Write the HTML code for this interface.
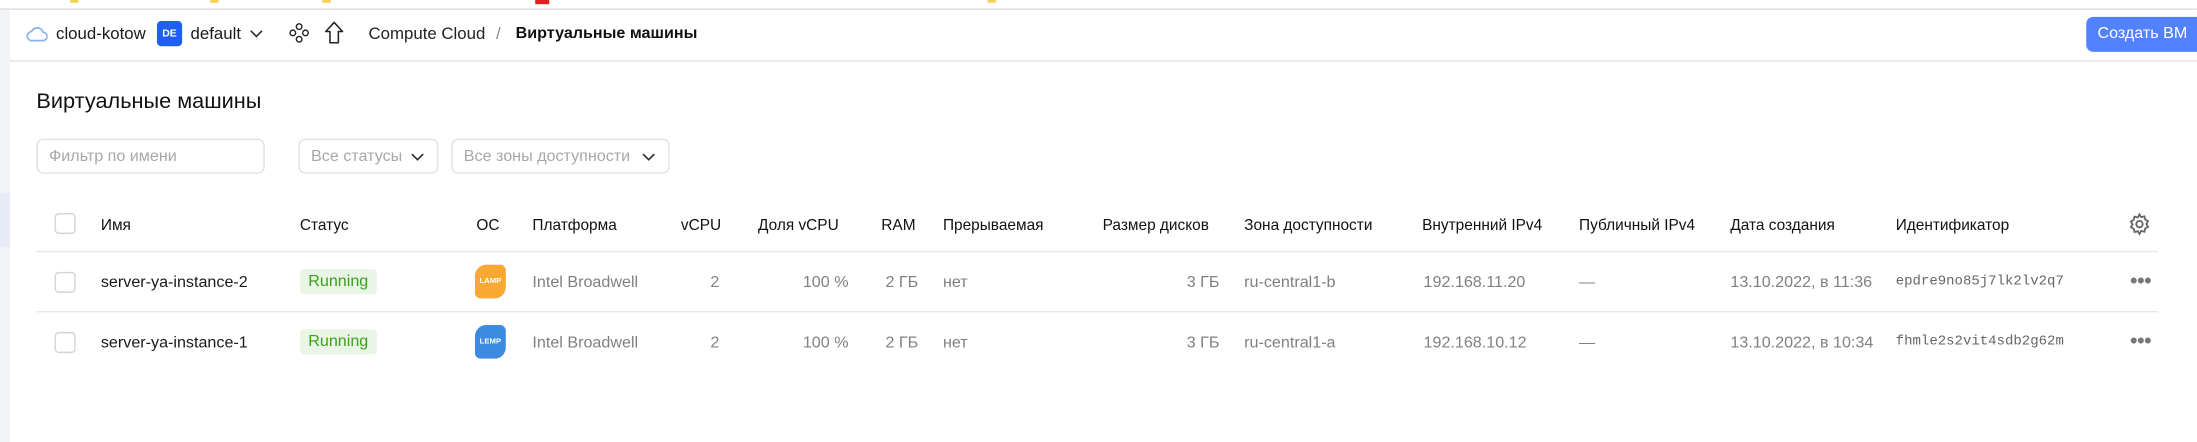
<!DOCTYPE html>
<html><head><meta charset="utf-8"><style>
html,body{margin:0;padding:0;background:#fff;overflow:hidden}
body{width:2197px;height:442px;position:relative}
#w{position:absolute;left:0;top:0;width:1568px;height:316px;transform:scale(1.4011);transform-origin:0 0;font-family:"Liberation Sans","Noto Sans CJK SC",sans-serif;color:#1a1a1a;font-size:11.5px}
.a{position:absolute;white-space:nowrap}
.g{color:#808080}
.h{top:155px;font-size:11px;color:#111}
.cb{position:absolute;width:13px;height:13px;border:1px solid #d4d4d4;border-radius:3px;background:#fff}
.sel{position:absolute;top:99px;height:25px;border:1px solid #e0e0e0;border-radius:5px;box-sizing:border-box;color:#a8a8a8;font-size:11.5px;line-height:24px;padding-left:8px}
.run{position:absolute;background:#e9f6e6;color:#3aa01c;border-radius:3px;font-size:11.5px;padding:2px 6px;line-height:14px}
.r1{top:195.5px}.r2{top:238.5px}
.mono{font-family:"Liberation Mono",monospace;font-size:10px;color:#666}
.dots{font-size:10px;color:#777;letter-spacing:-1px}
</style></head><body><div id="w">
<div class="a" style="left:0;top:0;width:1568px;height:6px;border-bottom:1px solid #dcdcdc"></div>
<div class="a" style="left:50px;top:0;width:6px;height:2px;background:#f3d15a"></div>
<div class="a" style="left:150px;top:0;width:6px;height:2px;background:#f3d15a"></div>
<div class="a" style="left:230px;top:0;width:6px;height:2px;background:#f3d15a"></div>
<div class="a" style="left:382px;top:0;width:10px;height:3px;background:#e02020"></div>
<div class="a" style="left:705px;top:0;width:6px;height:2px;background:#f3d15a"></div>
<div class="a" style="left:0;top:7px;width:7px;height:309px;background:#f2f3f6"></div>
<div class="a" style="left:0;top:138px;width:7px;height:38px;background:#e6ebf6"></div>
<div class="a" style="left:7px;top:43px;width:1561px;height:1px;background:#e2e2e2"></div>
<svg class="a" style="left:18px;top:18px" width="16" height="12" viewBox="0 0 16 12"><path d="M4 11h8.5a3 3 0 0 0 .3-6A4.5 4.5 0 0 0 4.5 4.5 3.3 3.3 0 0 0 4 11z" fill="none" stroke="#8ab0f5" stroke-width="1.2"/></svg>
<div class="a" style="left:40px;top:17px;font-size:12px">cloud-kotow</div>
<div class="a" style="left:112px;top:15px;width:18px;height:18px;background:#1f5ff3;border-radius:3px;color:#fff;font-size:7.5px;font-weight:bold;text-align:center;line-height:18px">DE</div>
<div class="a" style="left:136px;top:17px;font-size:12px">default</div>
<svg class="a" style="left:178px;top:21px" width="10" height="7"><path d="M1 1l4 4 4-4" fill="none" stroke="#333" stroke-width="1.2"/></svg>
<svg class="a" style="left:206px;top:16px" width="15" height="15" viewBox="0 0 15 15" fill="none" stroke="#222" stroke-width="1"><circle cx="7.5" cy="3" r="2"/><circle cx="3" cy="7.5" r="2"/><circle cx="12" cy="7.5" r="2"/><circle cx="7.5" cy="12" r="2"/></svg>
<svg class="a" style="left:231px;top:15px" width="15" height="17" viewBox="0 0 15 17"><path d="M7.5 1L1.5 7.5h3v8h6v-8h3z" fill="none" stroke="#222" stroke-width="1.1" stroke-linejoin="round"/></svg>
<div class="a" style="left:263px;top:17px;font-size:12px;color:#222">Compute Cloud</div>
<div class="a" style="left:354px;top:17px;font-size:12px;color:#888">/</div>
<div class="a" style="left:368px;top:18px;font-size:11.5px;font-weight:bold;color:#111">Виртуальные машины</div>
<div class="a" style="left:1489px;top:12px;width:90px;height:25px;background:#5282ff;border-radius:5px;color:#fff;font-size:11.5px;line-height:25px;padding-left:8px;box-sizing:border-box">Создать ВМ</div>
<div class="a" style="left:26px;top:64px;font-size:15.5px;color:#111">Виртуальные машины</div>
<div class="sel" style="left:26px;width:163px">Фильтр по имени</div>
<div class="sel" style="left:213px;width:100px">Все статусы</div>
<div class="sel" style="left:322px;width:156px">Все зоны доступности</div>
<svg class="a" style="left:293px;top:109px" width="10" height="7"><path d="M1 1l4 4 4-4" fill="none" stroke="#333" stroke-width="1.2"/></svg>
<svg class="a" style="left:458px;top:109px" width="10" height="7"><path d="M1 1l4 4 4-4" fill="none" stroke="#333" stroke-width="1.2"/></svg>
<div class="cb" style="left:39px;top:152px"></div>
<div class="a h" style="left:72px">Имя</div>
<div class="a h" style="left:214px">Статус</div>
<div class="a h" style="left:340px">ОС</div>
<div class="a h" style="left:380px">Платформа</div>
<div class="a h" style="left:486px">vCPU</div>
<div class="a h" style="left:541px">Доля vCPU</div>
<div class="a h" style="left:629px">RAM</div>
<div class="a h" style="left:673px">Прерываемая</div>
<div class="a h" style="left:787px">Размер дисков</div>
<div class="a h" style="left:888px">Зона доступности</div>
<div class="a h" style="left:1015px">Внутренний IPv4</div>
<div class="a h" style="left:1127px">Публичный IPv4</div>
<div class="a h" style="left:1235px">Дата создания</div>
<div class="a h" style="left:1353px">Идентификатор</div>
<svg class="a" style="left:1519px;top:152px" width="16" height="16" viewBox="0 0 16 16"><path d="M8 1l1.2 2 2.3-.6.6 2.3 2 1.2-1.2 2 1.2 2-2 1.2-.6 2.3-2.3-.6L8 15l-1.2-2-2.3.6-.6-2.3-2-1.2 1.2-2-1.2-2 2-1.2.6-2.3 2.3.6z" fill="none" stroke="#666" stroke-width="1.3"/><circle cx="8" cy="8" r="2.3" fill="none" stroke="#666" stroke-width="1.3"/></svg>
<div class="a" style="left:26px;top:179px;width:1514px;height:1px;background:#e6e6e6"></div>
<div class="a" style="left:26px;top:222px;width:1514px;height:1px;background:#e6e6e6"></div>
<!-- row1 -->
<div class="cb" style="left:39px;top:194px"></div>
<div class="a r1" style="left:72px">server-ya-instance-2</div>
<div class="run" style="left:214px;top:192px">Running</div>
<div class="a" style="left:339px;top:189px;width:22px;height:24px;background:#f7a933;border-radius:8px 4px 8px 4px;color:#fff;font-size:5.5px;font-weight:bold;line-height:24px;text-align:center">LAMP</div>
<div class="a r1 g" style="left:380px">Intel Broadwell</div>
<div class="a r1 g" style="left:507px">2</div>
<div class="a r1 g" style="left:573px">100 %</div>
<div class="a r1 g" style="left:632px">2 ГБ</div>
<div class="a r1 g" style="left:673px">нет</div>
<div class="a r1 g" style="left:847px">3 ГБ</div>
<div class="a r1 g" style="left:888px">ru-central1-b</div>
<div class="a r1 g" style="left:1016px">192.168.11.20</div>
<div class="a r1 g" style="left:1127px">—</div>
<div class="a r1 g" style="left:1235px">13.10.2022, в 11:36</div>
<div class="a r1 mono" style="left:1353px;top:196px">epdre9no85j7lk2lv2q7</div>
<div class="a dots" style="left:1520px;top:195px">●●●</div>
<!-- row2 -->
<div class="cb" style="left:39px;top:237px"></div>
<div class="a r2" style="left:72px">server-ya-instance-1</div>
<div class="run" style="left:214px;top:235px">Running</div>
<div class="a" style="left:339px;top:232px;width:22px;height:24px;background:#3d8be0;border-radius:8px 4px 8px 4px;color:#fff;font-size:5.5px;font-weight:bold;line-height:24px;text-align:center">LEMP</div>
<div class="a r2 g" style="left:380px">Intel Broadwell</div>
<div class="a r2 g" style="left:507px">2</div>
<div class="a r2 g" style="left:573px">100 %</div>
<div class="a r2 g" style="left:632px">2 ГБ</div>
<div class="a r2 g" style="left:673px">нет</div>
<div class="a r2 g" style="left:847px">3 ГБ</div>
<div class="a r2 g" style="left:888px">ru-central1-a</div>
<div class="a r2 g" style="left:1016px">192.168.10.12</div>
<div class="a r2 g" style="left:1127px">—</div>
<div class="a r2 g" style="left:1235px">13.10.2022, в 10:34</div>
<div class="a r2 mono" style="left:1353px;top:239px">fhmle2s2vit4sdb2g62m</div>
<div class="a dots" style="left:1520px;top:238px">●●●</div>
</div></body></html>
